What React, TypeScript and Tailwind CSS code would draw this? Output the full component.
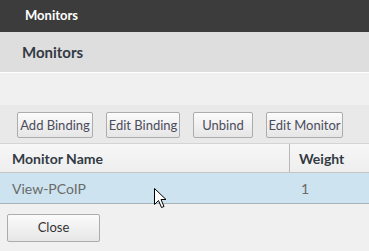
import React from "react";

const font = { fontFamily: 'Lato, "Open Sans", sans-serif' };

function Btn({ label, w }: { label: string; w: string }) {
  return (
    <button
      className={`${w} h-[26px] rounded-[2px] border border-[#acacac] bg-gradient-to-b from-[#fbfbfb] to-[#e6e6e6] text-[13px] text-[#4c4c5c] leading-none flex items-center justify-center`}
    >
      {label}
    </button>
  );
}

function Cursor() {
  return (
    <svg
      className="absolute left-[154px] top-[188px]"
      width="13"
      height="21"
      viewBox="0 0 13 21"
    >
      <path
        d="M0.5 0.5 L0.5 16.5 L4.5 12.5 L7.5 19.5 L10 18.5 L7 11.5 L12 11.5 Z"
        fill="#fff"
        stroke="#000"
        strokeWidth="1"
        strokeLinejoin="miter"
      />
    </svg>
  );
}

export default function App() {
  return (
    <div className="relative w-[369px] h-[251px] overflow-hidden bg-[#f0f0f0]" style={font}>
      <div className="h-[32px] bg-[#3c3c3c] flex items-center pl-[25px] text-white font-bold text-[13px]">
        Monitors
      </div>
      <div className="h-[41px] bg-[#dedede] border-b border-white flex items-center pl-[22px] text-[#333a44] font-bold text-[15px]">
        Monitors
      </div>
      <div className="h-[32px] bg-[#f0f0f0]" />
      <div className="h-[39px] bg-[#e9e9e9] border-b border-[#d4d4d4] flex pl-[17px] pt-[7px] gap-[13px]">
        <Btn label="Add Binding" w="w-[76px]" />
        <Btn label="Edit Binding" w="w-[74px]" />
        <Btn label="Unbind" w="w-[60px]" />
        <Btn label="Edit Monitor" w="w-[77px]" />
      </div>
      <div className="h-[29px] flex bg-gradient-to-b from-[#f7f7f7] to-[#eeeeee] border-b border-[#c4c4c4] text-[14px] font-bold text-[#333a44]">
        <div className="w-[290px] border-r border-[#b8b8b8] flex items-center pl-[12px]">Monitor Name</div>
        <div className="flex-1 flex items-center pl-[9px]">Weight</div>
      </div>
      <div className="h-[31px] flex bg-[#cde3ef] border-b border-[#a8b4bc] text-[14px] text-[#6a6a6a]">
        <div className="w-[290px] flex items-center pl-[12px]">View-PCoIP</div>
        <div className="flex-1 flex items-center pl-[11px]">1</div>
      </div>
      <div className="pl-[7px] pt-[10px]">
        <button className="w-[93px] h-[28px] rounded-[2px] border border-[#acacac] bg-gradient-to-b from-[#fbfbfb] to-[#e6e6e6] text-[13px] text-[#333] flex items-center justify-center">
          Close
        </button>
      </div>
      <Cursor />
    </div>
  );
}
